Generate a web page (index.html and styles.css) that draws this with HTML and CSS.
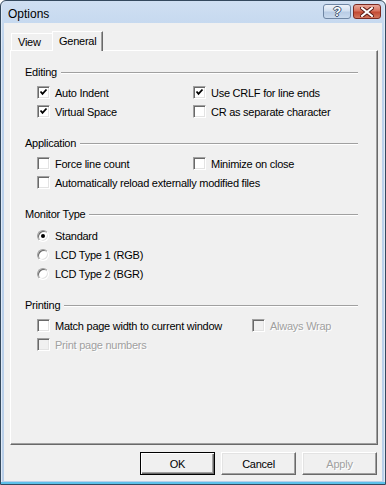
FILE: index.html
```html
<!DOCTYPE html>
<html lang="en">
  <head>
    <meta charset="UTF-8" />
    <title>Options</title>
    <link rel="stylesheet" href="styles.css">
  </head>
  <body>
    <div class="window">
      <div class="titlebar">
        <span class="title">Options</span>
        <div class="caption-buttons">
          <span class="cap-btn help">?</span>
          <span class="cap-btn close">
            <svg width="14" height="10" viewBox="0 0 14 10">
              <path d="M2 1 L12 9 M12 1 L2 9" stroke="#5a1a14" stroke-width="4" stroke-linecap="square"/>
              <path d="M2 1 L12 9 M12 1 L2 9" stroke="#fff" stroke-width="2" stroke-linecap="square"/>
            </svg>
          </span>
        </div>
      </div>

      <div class="client">
        <div class="tabs">
          <div class="tab">View</div>
          <div class="tab active">General</div>
        </div>

        <div class="panel">
          <!-- Editing -->
          <div class="group">
            <div class="group-title"><span>Editing</span></div>
            <div class="rows cols-wide">
              <label class="check"><span class="box"><svg width="9" height="9" viewBox="0 0 9 9"><path d="M1.5 3.5 L3.5 5.8 L7.5 1.5" fill="none" stroke="#000" stroke-width="1.8"/></svg></span>Auto Indent</label>
              <label class="check"><span class="box"><svg width="9" height="9" viewBox="0 0 9 9"><path d="M1.5 3.5 L3.5 5.8 L7.5 1.5" fill="none" stroke="#000" stroke-width="1.8"/></svg></span>Use CRLF for line ends</label>
              <label class="check"><span class="box"><svg width="9" height="9" viewBox="0 0 9 9"><path d="M1.5 3.5 L3.5 5.8 L7.5 1.5" fill="none" stroke="#000" stroke-width="1.8"/></svg></span>Virtual Space</label>
              <label class="check"><span class="box"></span>CR as separate character</label>
            </div>
          </div>

          <!-- Application -->
          <div class="group">
            <div class="group-title"><span>Application</span></div>
            <div class="rows cols-wide">
              <label class="check"><span class="box"></span>Force line count</label>
              <label class="check"><span class="box"></span>Minimize on close</label>
              <label class="check span-all"><span class="box"></span>Automatically reload externally modified files</label>
            </div>
          </div>

          <!-- Monitor Type -->
          <div class="group">
            <div class="group-title"><span>Monitor Type</span></div>
            <div class="rows radios">
              <label class="check"><span class="radio selected"></span>Standard</label>
              <label class="check"><span class="radio"></span>LCD Type 1 (RGB)</label>
              <label class="check"><span class="radio"></span>LCD Type 2 (BGR)</label>
            </div>
          </div>

          <!-- Printing -->
          <div class="group">
            <div class="group-title"><span>Printing</span></div>
            <div class="rows cols-print">
              <label class="check"><span class="box"></span>Match page width to current window</label>
              <label class="check disabled"><span class="box"></span>Always Wrap</label>
              <label class="check disabled"><span class="box"></span>Print page numbers</label>
            </div>
          </div>
        </div>

        <div class="buttons">
          <button class="btn default">OK</button>
          <button class="btn">Cancel</button>
          <button class="btn disabled">Apply</button>
        </div>
      </div>
    </div>
  </body>
</html>
```

FILE: styles.css
```css
* {
  box-sizing: border-box;
}

body {
  margin: 0;
  font-family: "Liberation Sans", Arial, sans-serif;
  font-size: 11px;
  letter-spacing: -0.25px;
  color: #000;
  background: #fff;
}

.window {
  width: 386px;
  height: 485px;
  border: 1px solid #34495e;
  border-radius: 6px 6px 0 0;
  background: linear-gradient(to bottom, #cfdff2 0%, #bcd2ec 10%, #b9cfe9 100%);
  box-shadow: inset 0 -2px 0 #5cc1ea, inset 1px 0 0 #dfeaf7, inset -1px 0 0 #dfeaf7;
  padding: 0 3px 3px 3px;
  display: flex;
  flex-direction: column;
}

/* title bar */
.titlebar {
  height: 22px;
  display: flex;
  align-items: flex-start;
  justify-content: space-between;
  padding-right: 1px;
}

.title {
  font-size: 12px;
  letter-spacing: 0;
  line-height: 14px;
  padding: 6px 0 0 4px;
  color: #000;
}

.caption-buttons {
  display: flex;
  gap: 2px;
  margin-top: 3px;
}

.cap-btn {
  width: 28px;
  height: 15px;
  border-radius: 3px;
  display: flex;
  align-items: center;
  justify-content: center;
}

.help {
  border: 1px solid #6f86a3;
  background: linear-gradient(to bottom, #eef3fa 0%, #d3e0f0 45%, #b8cce5 55%, #c9daee 100%);
  color: #fff;
  font-weight: bold;
  font-size: 13px;
  line-height: 13px;
  text-shadow: 1px 0 0 #3d516b, -1px 0 0 #3d516b, 0 1px 0 #3d516b, 0 -1px 0 #3d516b;
}

.close {
  border: 1px solid #7a2a22;
  background: linear-gradient(to bottom, #e9a99c 0%, #d7735f 45%, #c34a33 55%, #d2775f 100%);
}

/* client area */
.client {
  flex: 1;
  background: #f0f0f0;
  padding: 8px 4px 6px 6px;
  display: flex;
  flex-direction: column;
}

.tabs {
  height: 19px;
  display: flex;
  align-items: flex-end;
  padding-left: 1px;
}

.tab {
  height: 17px;
  border: 1px solid #fff;
  border-bottom: none;
  border-right: none;
  padding: 2px 0 0 6px;
  line-height: 13px;
  width: 41px;
  background: #f0f0f0;
}

.tab.active {
  position: relative;
  z-index: 1;
  height: 20px;
  width: 51px;
  margin-bottom: -1px;
  padding: 3px 0 0 6px;
  border-right: 1px solid #696969;
  box-shadow: inset -1px 0 0 #a0a0a0;
}

.panel {
  height: 395px;
  border: 1px solid;
  border-color: #fff #696969 #696969 #fff;
  box-shadow: inset -1px -1px 0 #a0a0a0;
  padding: 15px 19px 0 14px;
}

.group {
  margin-bottom: 16px;
}

.group-title {
  display: flex;
  align-items: center;
  gap: 4px;
  height: 13px;
  line-height: 13px;
}

.group-title::after {
  content: "";
  flex: 1;
  border-top: 1px solid #a0a0a0;
  border-bottom: 1px solid #fff;
}

.rows {
  margin-top: 4px;
  padding-left: 12px;
  display: grid;
  grid-auto-rows: 19px;
}

.cols-wide {
  grid-template-columns: 156px auto;
}

.cols-print {
  grid-template-columns: 215px auto;
}

.radios {
  margin-top: 5px;
}

.span-all {
  grid-column: 1 / -1;
}

.check {
  display: flex;
  align-items: center;
  gap: 5px;
  white-space: nowrap;
}

.box {
  width: 13px;
  height: 13px;
  flex: none;
  background: #fff;
  border: 1px solid;
  border-color: #a0a0a0 #fff #fff #a0a0a0;
  box-shadow: inset 1px 1px 0 #696969, inset -1px -1px 0 #e3e3e3;
  display: flex;
  align-items: center;
  justify-content: center;
}

.radio {
  width: 12px;
  height: 12px;
  flex: none;
  border-radius: 50%;
  background: #fff;
  border: 1px solid;
  border-color: #a0a0a0 #fff #fff #a0a0a0;
  box-shadow: inset 1px 1px 0 #696969, inset -1px -1px 0 #e3e3e3;
  display: flex;
  align-items: center;
  justify-content: center;
  margin-right: 1px;
}

.radio.selected::after {
  content: "";
  width: 4px;
  height: 4px;
  border-radius: 50%;
  background: #000;
}

.disabled {
  color: #a0a0a0;
  text-shadow: 1px 1px 0 #fff;
}

.disabled .box {
  background: #f0f0f0;
}

/* dialog buttons */
.buttons {
  margin-top: 7px;
  display: flex;
  justify-content: flex-end;
  gap: 6px;
  padding-right: 1px;
}

.btn {
  width: 75px;
  height: 23px;
  font-family: "Liberation Sans", Arial, sans-serif;
  font-size: 11px;
  letter-spacing: -0.25px;
  color: #000;
  background: #f0f0f0;
  border: 1px solid;
  border-color: #fff #696969 #696969 #fff;
  box-shadow: inset -1px -1px 0 #a0a0a0, inset 1px 1px 0 #e3e3e3;
  padding: 0;
}

.btn.default {
  border: 1px solid #000;
  box-shadow: inset 1px 1px 0 #fff, inset -1px -1px 0 #696969, inset -2px -2px 0 #a0a0a0;
}

.btn.disabled {
  color: #a0a0a0;
  text-shadow: 1px 1px 0 #fff;
}
```
